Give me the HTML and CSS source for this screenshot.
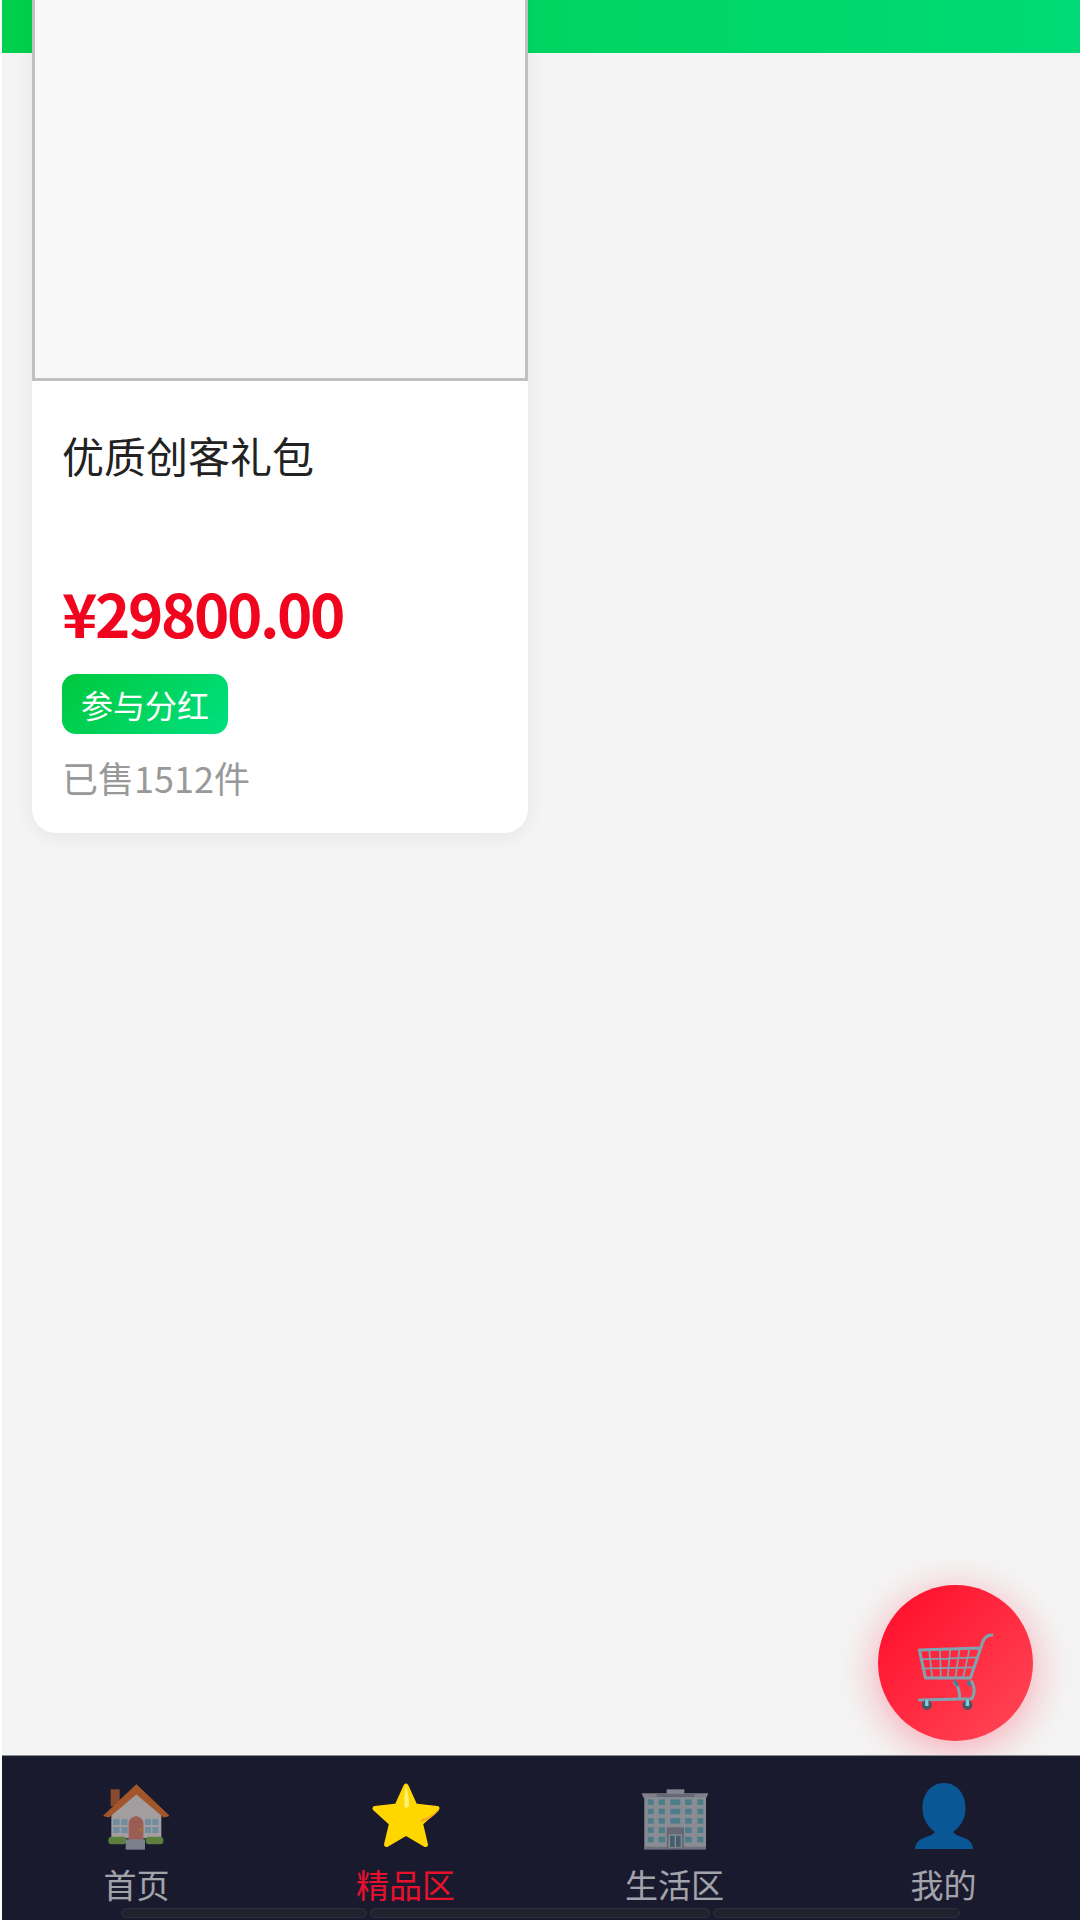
FILE: index.html
```html
<!DOCTYPE html>
<html lang="zh-CN">
<head>
<meta charset="UTF-8">
<meta name="viewport" content="width=device-width, initial-scale=1.0">
<title>精品区</title>
<link rel="stylesheet" href="styles.css">
</head>
<body>

<div class="page">
  <div class="top-bar"></div>

  <main class="goods-list">
    <div class="goods-card">
      <div class="goods-image"></div>
      <div class="goods-info">
        <div class="goods-title">优质创客礼包</div>
        <div class="goods-price">¥29800.00</div>
        <div class="goods-tag">参与分红</div>
        <div class="goods-sold">已售1512件</div>
      </div>
    </div>
  </main>

  <!-- Floating cart -->
  <div class="cart-btn">
    <svg class="cart-icon" viewBox="202 195 286 288" preserveAspectRatio="none">
      <g fill="none" stroke="#7fa3b0" stroke-linecap="round" stroke-linejoin="round">
        <path stroke-width="9" d="M452 255C432 256 426 268 420 290L388 384L254 384L236 300L418 294"/>
        <path stroke-width="5" d="M239 328L409 322M244 356L400 352M265 298L274 384M297 297L300 384M328 296L320 384M356 295L343 384M386 294L366 384"/>
        <path stroke-width="9" d="M392 395C400 410 402 430 392 446L236 450"/>
        <path stroke-width="9" d="M340 397C352 410 358 425 355 446"/>
      </g>
      <path stroke="#3f7f95" stroke-width="9" d="M340 392L350 408M380 394L388 408"/>
      <circle cx="258" cy="465" r="15" fill="#4d5560"/>
      <circle cx="379" cy="465" r="15" fill="#4d5560"/>
      <rect x="253" y="450" width="10" height="18" fill="#7fd0e0"/>
      <rect x="374" y="450" width="10" height="18" fill="#7fd0e0"/>
    </svg>
  </div>

  <nav class="tab-bar">
    <div class="tab-items">
      <div class="tab-item">
        <svg class="tab-icon" viewBox="64 30 216 216">
          <rect x="93" y="58" width="27" height="50" fill="#d56b32"/>
          <path d="M170 60L245 130V205H95V130Z" fill="#fff5ec"/>
          <path d="M72 137L170 44L268 137L252 141L170 72L88 141Z" fill="#ff7f28" stroke="#ff7f28" stroke-width="3" stroke-linejoin="round"/>
          <path d="M148 208V162C148 133 190 133 190 162V208Z" fill="#ef8a6c" stroke="#f29c7e" stroke-width="3"/>
          <g fill="#a9dcec">
            <rect x="100" y="147" width="20" height="18"/><rect x="125" y="147" width="19" height="18"/>
            <rect x="100" y="171" width="20" height="18"/><rect x="125" y="171" width="19" height="18"/>
            <rect x="196" y="147" width="18" height="18"/><rect x="218" y="147" width="18" height="18"/>
            <rect x="196" y="171" width="18" height="18"/><rect x="218" y="171" width="18" height="18"/>
          </g>
          <circle cx="183" cy="179" r="5" fill="#ffc107"/>
          <rect x="86" y="200" width="54" height="23" rx="10" fill="#8bc34a"/>
          <rect x="198" y="200" width="53" height="23" rx="10" fill="#8bc34a"/>
          <rect x="138" y="208" width="58" height="31" fill="#bcc4cc"/>
        </svg>
        <span class="tab-label">首页</span>
      </div>
      <div class="tab-item active">
        <svg class="tab-icon" viewBox="0 0 72 72">
          <path d="M36 6L45 26L67 28.500L50.500 43.500L55.500 64.500L36 53L16.500 64.500L21.500 43.500L5 28.500L27 26Z" fill="#ffd600" stroke="#ffd600" stroke-width="5" stroke-linejoin="round"/>
          <path d="M36 5C38 12 39 20 39 27C37 28 35 28 34.500 27C34 20 34.500 12 36 5Z" fill="#fff176"/>
          <path d="M69 28C65 34 59 37 52 39L50 42C58 41 63 37 69 30Z" fill="#f9a825"/>
        </svg>
        <span class="tab-label">精品区</span>
      </div>
      <div class="tab-item">
        <svg class="tab-icon" viewBox="54 30 216 216">
          <rect x="137" y="58" width="53" height="16" fill="#c9ccd2"/>
          <path d="M62 70H262L256 84H68Z" fill="#c2c5cb"/>
          <rect x="107" y="72" width="113" height="10" fill="#9a9da6"/>
          <rect x="70" y="82" width="185" height="156" fill="#d5d8d8"/>
          <rect x="70" y="230" width="185" height="8" fill="#a9acb4"/>
          <g fill="#71bfc8">
            <rect x="80" y="88" width="18" height="17"/><rect x="113" y="88" width="19" height="17"/><rect x="148" y="88" width="30" height="17"/><rect x="192" y="88" width="20" height="17"/><rect x="229" y="88" width="18" height="17"/>
            <rect x="80" y="116" width="18" height="17"/><rect x="113" y="116" width="19" height="17"/><rect x="148" y="116" width="30" height="17"/><rect x="192" y="116" width="20" height="17"/><rect x="229" y="116" width="18" height="17"/>
            <rect x="80" y="144" width="18" height="17"/><rect x="113" y="144" width="19" height="17"/><rect x="148" y="144" width="30" height="17"/><rect x="192" y="144" width="20" height="17"/><rect x="229" y="144" width="18" height="17"/>
            <rect x="80" y="172" width="18" height="17"/><rect x="113" y="172" width="19" height="17"/><rect x="192" y="172" width="20" height="17"/><rect x="229" y="172" width="18" height="17"/>
            <rect x="80" y="200" width="18" height="17"/><rect x="113" y="200" width="19" height="17"/><rect x="192" y="200" width="20" height="17"/><rect x="229" y="200" width="18" height="17"/>
          </g>
          <rect x="137" y="172" width="52" height="64" fill="#9a9da6"/>
          <rect x="143" y="193" width="40" height="40" fill="#d5d8d8"/>
          <rect x="147" y="197" width="14" height="34" fill="#5f8d9a"/>
          <rect x="165" y="197" width="14" height="34" fill="#5f8d9a"/>
        </svg>
        <span class="tab-label">生活区</span>
      </div>
      <div class="tab-item">
        <svg class="tab-icon" viewBox="0 0 72 72">
          <path d="M36 3C49 3 57.500 14 57.500 28C57.500 40 51 48 45 52C47 55 52 56 56 58C62 60 65 64 65 69H7C7 64 10 60 16 58C20 56 25 55 27 52C21 48 14.500 40 14.500 28C14.500 14 23 3 36 3Z" fill="#0080dc"/>
        </svg>
        <span class="tab-label">我的</span>
      </div>
    </div>
    <div class="home-bars">
      <span class="home-bar first"></span>
      <span class="home-bar middle"></span>
      <span class="home-bar last"></span>
    </div>
  </nav>
</div>

</body>
</html>
```

FILE: styles.css
```css
/* Basic Reset */
* {
  box-sizing: border-box;
  margin: 0;
  padding: 0;
  font-family: "Noto Sans CJK SC", "Noto Sans", sans-serif;
}

body {
  width: 1080px;
  height: 1920px;
  overflow: hidden;
  background: #fff;
}

/* Page */
.page {
  position: relative;
  display: flex;
  flex-direction: column;
  height: 1920px;
  margin-left: 2px;
  overflow: hidden;
  background: #f4f4f4;
}

.top-bar {
  flex: none;
  height: 53px;
  background: linear-gradient(90deg, #00d04c, #00da76);
}

/* Goods */
.goods-list {
  flex: 1;
  min-height: 0;
  margin-top: -168px;
  padding: 0 30px;
}

.goods-card {
  width: 496px;
  border-radius: 24px;
  background: #fff;
  overflow: hidden;
  box-shadow: 0 4px 20px rgba(0, 0, 0, 0.06);
}

.goods-image {
  height: 496px;
  background: #f8f8f8;
  border: 3px solid #c0c0c0;
}

.goods-info {
  padding: 46px 30px 32px;
}

.goods-title {
  height: 145px;
  font-size: 42px;
  line-height: 56px;
  color: #222;
}

.goods-price {
  font-size: 60px;
  line-height: 80px;
  font-weight: 700;
  letter-spacing: -2.4px;
  color: #f0041e;
}

.goods-tag {
  display: inline-block;
  height: 60px;
  margin-top: 22px;
  padding: 0 19px;
  border-radius: 14px;
  font-size: 32px;
  line-height: 60px;
  color: #fff;
  background: linear-gradient(135deg, #00c83c, #00e080);
}

.goods-sold {
  margin-top: 19px;
  font-size: 36px;
  line-height: 48px;
  color: #999;
}

/* Floating cart */
.cart-btn {
  position: absolute;
  left: 876px;
  top: 1585px;
  display: flex;
  align-items: center;
  justify-content: center;
  width: 155px;
  height: 156px;
  border-radius: 50%;
  background: linear-gradient(135deg, #ff0a28, #ff4a58);
  box-shadow: 0 8px 40px rgba(255, 20, 50, 0.35);
}

.cart-icon {
  width: 96px;
  height: 96px;
}

/* Tab bar */
.tab-bar {
  flex: none;
  position: relative;
  height: 165px;
  padding-top: 24px;
  border-top: 1px solid #8a8a92;
  background: #1a1a2e;
}

.tab-items {
  display: grid;
  grid-template-columns: repeat(4, 1fr);
  padding-right: 2px;
}

.tab-item {
  display: flex;
  flex-direction: column;
  align-items: center;
  color: #fff;
  opacity: 0.6;
}

.tab-item.active {
  color: #e8112d;
  opacity: 1;
}

.tab-icon {
  width: 72px;
  height: 72px;
}

.tab-label {
  margin-top: 16px;
  font-size: 33px;
  line-height: 33px;
}

.home-bars {
  display: flex;
  gap: 3px;
  margin-top: 7px;
  padding-left: 119px;
}

.home-bar {
  height: 10px;
  border: 1px solid #30303e;
  border-radius: 6px;
  background: #22222f;
}

.home-bar.first {
  width: 246px;
}

.home-bar.middle {
  width: 340px;
}

.home-bar.last {
  width: 247px;
}
```
